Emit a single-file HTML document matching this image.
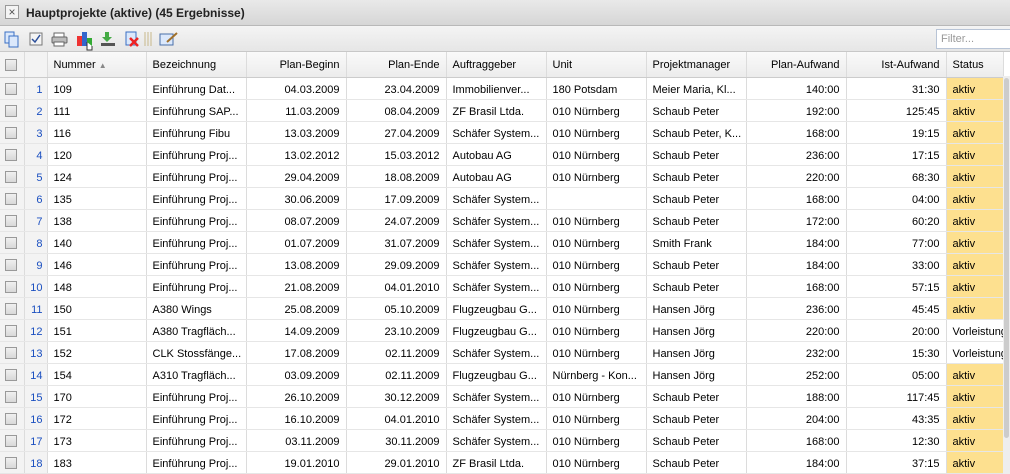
<!DOCTYPE html>
<html><head><meta charset="utf-8"><style>
*{margin:0;padding:0;box-sizing:border-box}
body{width:1010px;height:474px;overflow:hidden;background:#fff;font-family:"Liberation Sans",Tahoma,sans-serif;font-size:11px;color:#000;position:relative}
.title{position:absolute;left:0;top:0;width:1010px;height:26px;background:linear-gradient(#e9e9e9,#d6d6d6);border-bottom:1px solid #b8b8b8}
.title .x{position:absolute;left:5px;top:5px;width:14px;height:14px;border:1px solid #999;background:#f4f4f4;font-size:12px;line-height:12px;text-align:center;color:#555}
.title .t{position:absolute;left:26px;top:6px;font-weight:bold;font-size:12px;color:#222}
.tb{position:absolute;left:0;top:26px;width:1010px;height:26px;background:linear-gradient(#f4f4f4,#e6e6e6);border-bottom:1px solid #c8c8c8}
.filter{position:absolute;left:936px;top:3px;width:80px;height:20px;border:1px solid #b8c4d6;background:#fff;color:#999;padding:3px 4px;font-size:11px}
table{position:absolute;left:0;top:52px;border-collapse:collapse;table-layout:fixed;width:1003px}
td,th{height:22px;border-right:1px solid #dcdcdc;border-bottom:1px solid #e6e6e6;white-space:nowrap;overflow:hidden;padding:3px 6px 0;font-weight:normal}
th{height:25px;background:linear-gradient(#fafafa,#ececec);border-bottom:1px solid #ccc;text-align:left;padding-top:2px}
td.r,th.r{text-align:right}
td.c0,th.c0{padding:2px 0 0;background:#f3f3f3}
td.c1{padding:3px 4px 0 0;text-align:right;color:#1a4fc0;background:#f3f3f3}
th.c1{background:#f3f3f3}
.cb{display:block;width:12px;height:12px;border:1px solid #999;background:linear-gradient(#f0f0f0,#d8d8d8);margin:0 0 0 5px}
td.a{background:#fde08f}
.sb{position:absolute;left:1003px;top:76px;width:7px;height:398px;background:#eee}
.sb div{position:absolute;left:1px;top:2px;width:5px;height:360px;background:#ccc;border-radius:3px}
</style></head><body>
<div class="title"><div class="x">×</div><div class="t">Hauptprojekte (aktive) (45 Ergebnisse)</div></div>
<div class="tb">
<svg width="200" height="26" style="position:absolute;left:0;top:0">
<rect x="5" y="6" width="9" height="11" fill="#dbe8fb" stroke="#3a6fc4"/><rect x="9" y="10" width="9" height="11" fill="#dbe8fb" stroke="#3a6fc4"/>
<rect x="30" y="7" width="12" height="12" fill="#f4f4f4" stroke="#777"/><path d="M32 13l3 3 5-7" stroke="#2c4f9a" stroke-width="1.5" fill="none"/>
<rect x="54" y="7" width="10" height="5" fill="#fff" stroke="#666"/><rect x="52" y="11" width="15" height="6" rx="1" fill="#bbb" stroke="#666"/><rect x="54" y="16" width="10" height="4" fill="#fff" stroke="#666"/>
<rect x="77" y="10" width="5" height="10" fill="#e33"/><rect x="82" y="6" width="5" height="14" fill="#36c"/><rect x="87" y="12" width="5" height="8" fill="#3a3"/>
<path d="M87 16v8h5v-4" stroke="#333" fill="#fff"/>
<path d="M105 6h4v5h3l-5 5-5-5h3z" fill="#4a4"/><rect x="101" y="17" width="14" height="3" fill="#555"/>
<rect x="126" y="6" width="10" height="13" fill="#dbe8fb" stroke="#3a6fc4"/><path d="M130 12l8 8M138 12l-8 8" stroke="#e22" stroke-width="2.5"/>
<path d="M145 6v14M148 6v14M151 6v14" stroke="#c8b88a"/>
<rect x="160" y="8" width="13" height="11" fill="#dbe8fb" stroke="#4a6fa8"/><path d="M167 16l10-9" stroke="#a0702a" stroke-width="2"/>
</svg>
<div class="filter">Filter...</div></div>
<table>
<colgroup><col style="width:24px"><col style="width:23px"><col style="width:99px"><col style="width:100px"><col style="width:100px"><col style="width:100px"><col style="width:100px"><col style="width:100px"><col style="width:100px"><col style="width:100px"><col style="width:100px"><col style="width:57px"></colgroup>
<tr><th class="c0"><span class="cb"></span></th><th class="c1"></th><th>Nummer <span style="color:#888;font-size:8px">▲</span></th><th>Bezeichnung</th><th class="r">Plan-Beginn</th><th class="r">Plan-Ende</th><th>Auftraggeber</th><th>Unit</th><th>Projektmanager</th><th class="r">Plan-Aufwand</th><th class="r">Ist-Aufwand</th><th>Status</th></tr>
<tr><td class="c0"><span class="cb"></span></td><td class="c1">1</td><td>109</td><td>Einführung Dat...</td><td class="r">04.03.2009</td><td class="r">23.04.2009</td><td>Immobilienver...</td><td>180 Potsdam</td><td>Meier Maria, Kl...</td><td class="r">140:00</td><td class="r">31:30</td><td class="a">aktiv</td></tr>
<tr><td class="c0"><span class="cb"></span></td><td class="c1">2</td><td>111</td><td>Einführung SAP...</td><td class="r">11.03.2009</td><td class="r">08.04.2009</td><td>ZF Brasil Ltda.</td><td>010 Nürnberg</td><td>Schaub Peter</td><td class="r">192:00</td><td class="r">125:45</td><td class="a">aktiv</td></tr>
<tr><td class="c0"><span class="cb"></span></td><td class="c1">3</td><td>116</td><td>Einführung Fibu</td><td class="r">13.03.2009</td><td class="r">27.04.2009</td><td>Schäfer System...</td><td>010 Nürnberg</td><td>Schaub Peter, K...</td><td class="r">168:00</td><td class="r">19:15</td><td class="a">aktiv</td></tr>
<tr><td class="c0"><span class="cb"></span></td><td class="c1">4</td><td>120</td><td>Einführung Proj...</td><td class="r">13.02.2012</td><td class="r">15.03.2012</td><td>Autobau AG</td><td>010 Nürnberg</td><td>Schaub Peter</td><td class="r">236:00</td><td class="r">17:15</td><td class="a">aktiv</td></tr>
<tr><td class="c0"><span class="cb"></span></td><td class="c1">5</td><td>124</td><td>Einführung Proj...</td><td class="r">29.04.2009</td><td class="r">18.08.2009</td><td>Autobau AG</td><td>010 Nürnberg</td><td>Schaub Peter</td><td class="r">220:00</td><td class="r">68:30</td><td class="a">aktiv</td></tr>
<tr><td class="c0"><span class="cb"></span></td><td class="c1">6</td><td>135</td><td>Einführung Proj...</td><td class="r">30.06.2009</td><td class="r">17.09.2009</td><td>Schäfer System...</td><td></td><td>Schaub Peter</td><td class="r">168:00</td><td class="r">04:00</td><td class="a">aktiv</td></tr>
<tr><td class="c0"><span class="cb"></span></td><td class="c1">7</td><td>138</td><td>Einführung Proj...</td><td class="r">08.07.2009</td><td class="r">24.07.2009</td><td>Schäfer System...</td><td>010 Nürnberg</td><td>Schaub Peter</td><td class="r">172:00</td><td class="r">60:20</td><td class="a">aktiv</td></tr>
<tr><td class="c0"><span class="cb"></span></td><td class="c1">8</td><td>140</td><td>Einführung Proj...</td><td class="r">01.07.2009</td><td class="r">31.07.2009</td><td>Schäfer System...</td><td>010 Nürnberg</td><td>Smith Frank</td><td class="r">184:00</td><td class="r">77:00</td><td class="a">aktiv</td></tr>
<tr><td class="c0"><span class="cb"></span></td><td class="c1">9</td><td>146</td><td>Einführung Proj...</td><td class="r">13.08.2009</td><td class="r">29.09.2009</td><td>Schäfer System...</td><td>010 Nürnberg</td><td>Schaub Peter</td><td class="r">184:00</td><td class="r">33:00</td><td class="a">aktiv</td></tr>
<tr><td class="c0"><span class="cb"></span></td><td class="c1">10</td><td>148</td><td>Einführung Proj...</td><td class="r">21.08.2009</td><td class="r">04.01.2010</td><td>Schäfer System...</td><td>010 Nürnberg</td><td>Schaub Peter</td><td class="r">168:00</td><td class="r">57:15</td><td class="a">aktiv</td></tr>
<tr><td class="c0"><span class="cb"></span></td><td class="c1">11</td><td>150</td><td>A380 Wings</td><td class="r">25.08.2009</td><td class="r">05.10.2009</td><td>Flugzeugbau G...</td><td>010 Nürnberg</td><td>Hansen Jörg</td><td class="r">236:00</td><td class="r">45:45</td><td class="a">aktiv</td></tr>
<tr><td class="c0"><span class="cb"></span></td><td class="c1">12</td><td>151</td><td>A380 Tragfläch...</td><td class="r">14.09.2009</td><td class="r">23.10.2009</td><td>Flugzeugbau G...</td><td>010 Nürnberg</td><td>Hansen Jörg</td><td class="r">220:00</td><td class="r">20:00</td><td>Vorleistung</td></tr>
<tr><td class="c0"><span class="cb"></span></td><td class="c1">13</td><td>152</td><td>CLK Stossfänge...</td><td class="r">17.08.2009</td><td class="r">02.11.2009</td><td>Schäfer System...</td><td>010 Nürnberg</td><td>Hansen Jörg</td><td class="r">232:00</td><td class="r">15:30</td><td>Vorleistung</td></tr>
<tr><td class="c0"><span class="cb"></span></td><td class="c1">14</td><td>154</td><td>A310 Tragfläch...</td><td class="r">03.09.2009</td><td class="r">02.11.2009</td><td>Flugzeugbau G...</td><td>Nürnberg - Kon...</td><td>Hansen Jörg</td><td class="r">252:00</td><td class="r">05:00</td><td class="a">aktiv</td></tr>
<tr><td class="c0"><span class="cb"></span></td><td class="c1">15</td><td>170</td><td>Einführung Proj...</td><td class="r">26.10.2009</td><td class="r">30.12.2009</td><td>Schäfer System...</td><td>010 Nürnberg</td><td>Schaub Peter</td><td class="r">188:00</td><td class="r">117:45</td><td class="a">aktiv</td></tr>
<tr><td class="c0"><span class="cb"></span></td><td class="c1">16</td><td>172</td><td>Einführung Proj...</td><td class="r">16.10.2009</td><td class="r">04.01.2010</td><td>Schäfer System...</td><td>010 Nürnberg</td><td>Schaub Peter</td><td class="r">204:00</td><td class="r">43:35</td><td class="a">aktiv</td></tr>
<tr><td class="c0"><span class="cb"></span></td><td class="c1">17</td><td>173</td><td>Einführung Proj...</td><td class="r">03.11.2009</td><td class="r">30.11.2009</td><td>Schäfer System...</td><td>010 Nürnberg</td><td>Schaub Peter</td><td class="r">168:00</td><td class="r">12:30</td><td class="a">aktiv</td></tr>
<tr><td class="c0"><span class="cb"></span></td><td class="c1">18</td><td>183</td><td>Einführung Proj...</td><td class="r">19.01.2010</td><td class="r">29.01.2010</td><td>ZF Brasil Ltda.</td><td>010 Nürnberg</td><td>Schaub Peter</td><td class="r">184:00</td><td class="r">37:15</td><td class="a">aktiv</td></tr>
</table>
<div class="sb"><div></div></div>
</body></html>
